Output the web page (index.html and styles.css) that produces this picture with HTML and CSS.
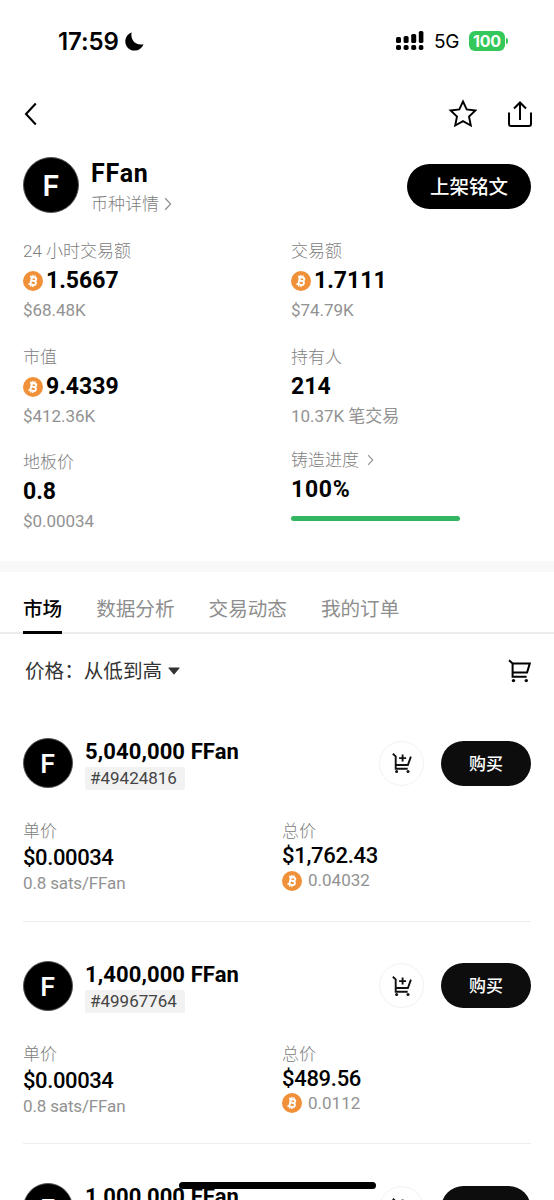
FILE: index.html
```
<!DOCTYPE html>
<html lang="zh-CN">
<head>
  <meta charset="utf-8">
  <title>FFan</title>
  <link rel="stylesheet" href="styles.css">
</head>
<body>

  <!-- shared icons -->
  <svg class="sprite">
    <symbol id="btc" viewBox="0 0 20 20">
      <circle cx="10" cy="10" r="10" fill="#f0913a"/>
      <g fill="none" stroke="#fff" transform="rotate(12 10 10)">
        <path d="M8.1 6v8M6.2 6.2h4.700c2.600 0 2.600 3.600 0 3.600H8.200M6.200 13.800h5.100c2.700 0 2.700-4 0-4" stroke-width="1.900"/>
        <path d="M8.800 4v2M11 4v2M8.800 14v2M11 14v2" stroke-width="1.300"/>
      </g>
    </symbol>
    <symbol id="arrow" viewBox="0 0 8 14">
      <path d="M1.2 1.2L6.6 7l-5.4 5.8" fill="none" stroke="#929292" stroke-width="1.3"/>
    </symbol>
    <symbol id="cart-add" viewBox="0 0 20 20">
      <path d="M.8 .8l2.900 2.600v12.400h12M3.700 12h12.200l3-8.400M10.600 1.600v7M7.100 5.100h7" fill="none" stroke="#111" stroke-width="1.900"/>
      <circle cx="4.600" cy="18.500" r="1.500" fill="#111"/>
      <circle cx="16" cy="18.500" r="1.500" fill="#111"/>
    </symbol>
  </svg>

  <div class="status-bar">
    <span class="time">17:59</span>
    <svg class="moon" width="19" height="19" viewBox="0 0 19 19"><path d="M6.600 .4C5.100 7.500 10.600 14 18.500 12.200 16.900 16.300 13.500 18.600 9.500 18.600 4.300 18.600 .3 14.600 .3 9.500 .3 5.400 2.800 1.700 6.600 .4z"/></svg>
    <svg class="signal" width="28" height="20" viewBox="0 0 28 20">
      <rect x="0" y="6" width="5" height="6" rx="1.6"/><rect x="7.600" y="5" width="5" height="7" rx="1.6"/>
      <rect x="15.200" y="3" width="5" height="9" rx="1.6"/><rect x="22.800" y="0" width="4.600" height="12" rx="1.6"/>
      <rect x="0" y="14" width="5" height="5" rx="1.8"/><rect x="7.600" y="14" width="5" height="5" rx="1.8"/>
      <rect x="15.200" y="14" width="5" height="5" rx="1.8"/><rect x="22.800" y="14" width="4.600" height="5" rx="1.8"/>
    </svg>
    <span class="network">5G</span>
    <span class="battery">100</span>
    <span class="battery-tip"></span>
  </div>

  <div class="nav">
    <svg class="back" width="14" height="24" viewBox="0 0 14 24"><path d="M11.800 1.500L2 12l9.800 10.500" fill="none" stroke="#000" stroke-width="2.100"/></svg>
    <svg class="star" width="30" height="30" viewBox="0 0 30 30"><path d="M15 2.500l3.700 7.900 8.700 1.100-6.400 6 1.800 9-7.800-4.400-7.800 4.400 1.800-9-6.400-6 8.700-1.100z" fill="none" stroke="#000" stroke-width="1.900"/></svg>
    <svg class="share" width="26" height="28" viewBox="0 0 26 28"><path d="M2 12.500v11.500q0 2 2 2h18q2 0 2-2V12.500M13 20V2.500M7 8.500l6-6 6 6" fill="none" stroke="#000" stroke-width="2"/></svg>
  </div>

  <div class="token">
    <div class="avatar avatar-lg">F</div>
    <div class="token-info">
      <div class="token-name">FFan</div>
      <div class="token-link">币种详情 <svg width="8" height="14"><use href="#arrow"/></svg></div>
    </div>
    <button class="list-btn">上架铭文</button>
  </div>

  <div class="stats">
    <div class="stat">
      <div class="label">24 小时交易额</div>
      <div class="value"><svg width="20" height="20"><use href="#btc"/></svg>1.5667</div>
      <div class="sub">$68.48K</div>
    </div>
    <div class="stat">
      <div class="label">交易额</div>
      <div class="value"><svg width="20" height="20"><use href="#btc"/></svg>1.7111</div>
      <div class="sub">$74.79K</div>
    </div>
    <div class="stat">
      <div class="label">市值</div>
      <div class="value"><svg width="20" height="20"><use href="#btc"/></svg>9.4339</div>
      <div class="sub">$412.36K</div>
    </div>
    <div class="stat">
      <div class="label">持有人</div>
      <div class="value">214</div>
      <div class="sub">10.37K 笔交易</div>
    </div>
    <div class="stat">
      <div class="label">地板价</div>
      <div class="value">0.8</div>
      <div class="sub">$0.00034</div>
    </div>
    <div class="stat stat-mint">
      <div class="label">铸造进度 <svg width="7" height="12"><use href="#arrow"/></svg></div>
      <div class="value">100%</div>
      <div class="progress"></div>
    </div>
  </div>

  <div class="tabs">
    <div class="tab active">市场</div>
    <div class="tab">数据分析</div>
    <div class="tab">交易动态</div>
    <div class="tab">我的订单</div>
  </div>

  <div class="filter">
    <span class="sort">价格：从低到高</span>
    <svg class="caret" width="12" height="8" viewBox="0 0 12 8"><path d="M1 .5h10q1 0 .4.800L6.700 7q-.7.800-1.400 0L.6 1.300Q0 .5 1 .5z" fill="#333"/></svg>
    <svg class="cart" width="24" height="24" viewBox="0 0 24 24">
      <path d="M1 1.200l3.600 3.200v13.400h14M4.600 4.400h17.200l-2.700 9.200H4.600" fill="none" stroke="#000" stroke-width="2"/>
      <circle cx="5.500" cy="21.600" r="1.700"/>
      <circle cx="18.300" cy="21.600" r="1.700"/>
    </svg>
  </div>

  <div class="item">
    <div class="item-head">
      <div class="avatar">F</div>
      <div class="item-info">
        <div class="item-title">5,040,000 FFan</div>
        <span class="tag">#49424816</span>
      </div>
      <div class="cart-btn"><svg width="20" height="20"><use href="#cart-add"/></svg></div>
      <button class="buy-btn">购买</button>
    </div>
    <div class="prices">
      <div class="unit">
        <div class="label">单价</div>
        <div class="amount">$0.00034</div>
        <div class="sub">0.8 sats/FFan</div>
      </div>
      <div class="total">
        <div class="label">总价</div>
        <div class="amount">$1,762.43</div>
        <div class="sub"><svg width="20" height="20"><use href="#btc"/></svg>0.04032</div>
      </div>
    </div>
  </div>

  <div class="item">
    <div class="item-head">
      <div class="avatar">F</div>
      <div class="item-info">
        <div class="item-title">1,400,000 FFan</div>
        <span class="tag">#49967764</span>
      </div>
      <div class="cart-btn"><svg width="20" height="20"><use href="#cart-add"/></svg></div>
      <button class="buy-btn">购买</button>
    </div>
    <div class="prices">
      <div class="unit">
        <div class="label">单价</div>
        <div class="amount">$0.00034</div>
        <div class="sub">0.8 sats/FFan</div>
      </div>
      <div class="total">
        <div class="label">总价</div>
        <div class="amount">$489.56</div>
        <div class="sub"><svg width="20" height="20"><use href="#btc"/></svg>0.0112</div>
      </div>
    </div>
  </div>

  <div class="item last">
    <div class="item-head">
      <div class="avatar">F</div>
      <div class="item-info">
        <div class="item-title">1,000,000 FFan</div>
      </div>
      <div class="cart-btn"><svg width="20" height="20"><use href="#cart-add"/></svg></div>
      <button class="buy-btn"></button>
    </div>
  </div>

  <div class="home-bar"></div>

</body>
</html>
```
FILE: styles.css
```
* { box-sizing: border-box; }
html { height: 1200px; overflow: hidden; }
body { margin: 0; height: 1200px; overflow: hidden; background: #fff; color: #000; font-family: Roboto, "Noto Sans CJK SC", sans-serif; font-size: 17px; }
svg { display: block; flex: none; }
button { border: 0; padding: 0; font-family: inherit; color: #fff; }
.sprite { position: absolute; width: 0; height: 0; }

/* status bar + nav */
.status-bar { display: flex; align-items: center; height: 82px; padding: 0 46px 0 58px; font-family: Inter, sans-serif; }
.time { width: 61px; font-size: 24px; font-weight: 600; letter-spacing: -0.1px; white-space: nowrap; }
.moon { margin-left: 6px; }
.signal { margin-left: auto; }
.network { margin-left: 10px; width: 26px; padding-top: 1px; font-size: 19px; letter-spacing: -0.3px; white-space: nowrap; }
.battery { margin-left: 9px; width: 36px; height: 20px; border-radius: 6px; background: #34c759; color: #fff; font-size: 16px; font-weight: 700; line-height: 20px; letter-spacing: -0.2px; text-align: center; }
.battery-tip { width: 2px; height: 6px; margin-left: 1px; border-radius: 0 2px 2px 0; background: #34c759; }
.nav { display: flex; align-items: center; height: 64px; padding: 0 21px 0 24px; }
.star { margin-left: auto; }
.share { margin-left: 29px; }

/* token header */
.token { display: flex; align-items: center; height: 78px; padding: 0 23px; }
.avatar { flex: none; width: 50px; height: 50px; border-radius: 50%; border: 1px solid #555; background: #000; color: #fff; font-family: Inter, sans-serif; font-size: 26px; font-weight: 600; line-height: 49px; text-align: center; }
.avatar-lg { width: 56px; height: 56px; font-size: 29px; line-height: 55px; }
.token-info { margin-left: 12px; padding-top: 3px; }
.token-name { font-size: 25px; font-weight: 700; line-height: 34px; letter-spacing: 0.8px; }
.token-link { display: flex; align-items: center; gap: 5px; line-height: 26px; color: #808080; font-weight: 300; }
.list-btn { margin: 3px 0 0 auto; padding-bottom: 2px; width: 124px; height: 45px; border-radius: 23px; background: #000; font-size: 19.5px; font-weight: 500; }

/* stats */
.stats { display: grid; grid-template-columns: 268px 1fr; row-gap: 22.6px; padding: 15px 23px 0; height: 337px; align-content: start; }
.label, .sub { line-height: 24px; color: #929292; }
.label { display: flex; align-items: center; gap: 8px; font-weight: 300; color: #808080; }
.value { display: flex; align-items: center; gap: 3px; padding-top: 1px; font-size: 23px; font-weight: 700; line-height: 34px; }
.stats .sub { letter-spacing: -0.05px; }
.stat-mint { margin-top: -2px; }
.stat-mint .value { letter-spacing: 0.7px; }
.progress { width: 169px; height: 5px; margin-top: 9px; border-radius: 3px; background: #32b760; }

/* tabs */
.tabs { display: flex; gap: 34px; height: 73px; padding: 11px 23px 0; border-top: 11px solid #f8f8f8; border-bottom: 2px solid #ececec; }
.tab { height: 51px; line-height: 53px; font-size: 19.6px; color: #8e8e8e; }
.tab.active { color: #000; font-weight: 500; border-bottom: 3px solid #000; }

.filter { display: flex; align-items: center; height: 65px; padding: 9px 22px 0 25px; color: #333; font-size: 19.6px; }
.sort { padding-bottom: 3px; }
.caret { margin-left: 6px; }
.cart { margin-left: auto; }

/* listings */
.item { height: 222.7px; margin: 0 23px; padding-top: 39px; border-bottom: 1px solid #ededed; }
.item.last { height: 239px; border: 0; }
.item-head { display: flex; align-items: center; height: 50px; }
.item-info { height: 50px; margin-left: 12px; }
.item-title { font-size: 22px; font-weight: 700; line-height: 27px; margin-bottom: 2px; letter-spacing: 0.1px; }
.tag { display: block; width: 100px; height: 23px; padding-left: 5px; border-radius: 2px; background: #f2f2f2; color: #444; line-height: 23px; }
.cart-btn { display: flex; align-items: center; justify-content: center; width: 45px; height: 45px; margin-left: auto; border: 1px solid #f2f2f2; border-radius: 50%; }
.buy-btn { width: 90px; height: 45px; margin-left: 17px; padding-bottom: 2px; border-radius: 23px; background: #0d0d0d; font-size: 17px; font-weight: 500; }
.prices { display: grid; grid-template-columns: 259px 1fr; margin-top: 31px; }
.amount { font-size: 22px; font-weight: 500; line-height: 29px; letter-spacing: -0.4px; }
.unit .sub { line-height: 23px; letter-spacing: -0.15px; }
.total .amount { line-height: 25px; letter-spacing: -0.3px; }
.total .sub { display: flex; align-items: center; gap: 6px; line-height: 25px; }

.home-bar { position: absolute; left: 179px; top: 1182px; width: 197px; height: 7px; border-radius: 4px; background: #000; }
```
